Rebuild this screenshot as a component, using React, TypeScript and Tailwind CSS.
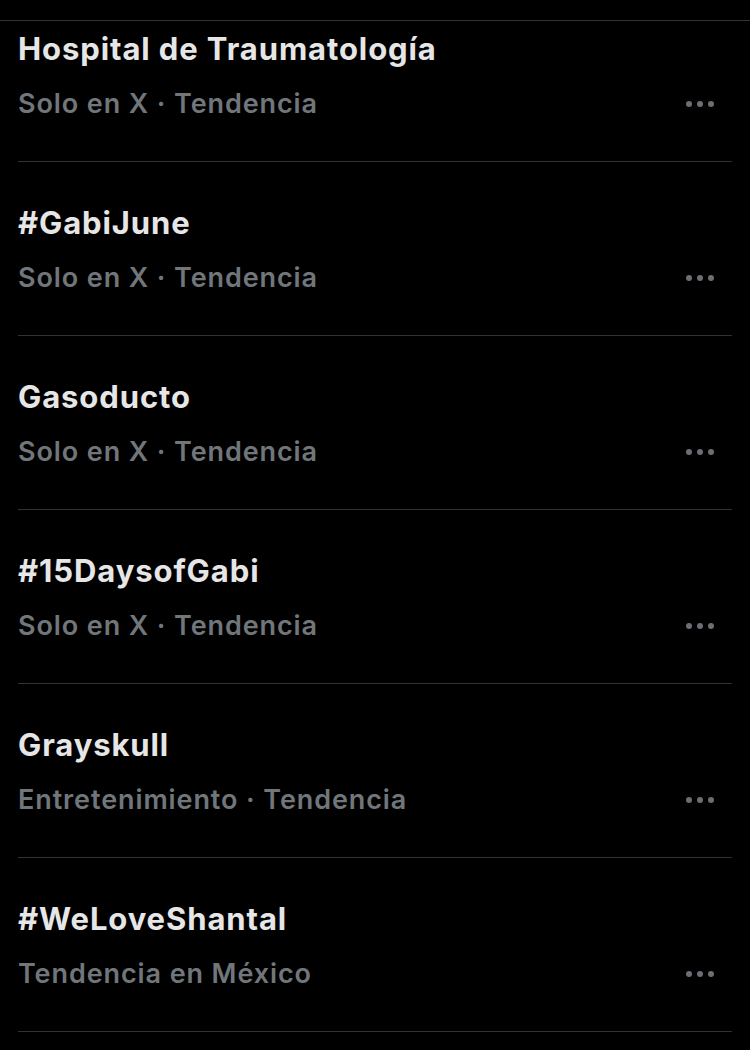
import React from 'react';

interface Trend {
  title: string;
  meta: string;
}

const trends: Trend[] = [
  { title: 'Hospital de Traumatología', meta: 'Solo en X · Tendencia' },
  { title: '#GabiJune', meta: 'Solo en X · Tendencia' },
  { title: 'Gasoducto', meta: 'Solo en X · Tendencia' },
  { title: '#15DaysofGabi', meta: 'Solo en X · Tendencia' },
  { title: 'Grayskull', meta: 'Entretenimiento · Tendencia' },
  { title: '#WeLoveShantal', meta: 'Tendencia en México' },
];

const MoreDots = () => (
  <div className="flex items-center gap-[5px] pr-[18px]">
    <div className="w-[6px] h-[6px] rounded-full bg-[#6b6f73]"></div>
    <div className="w-[6px] h-[6px] rounded-full bg-[#6b6f73]"></div>
    <div className="w-[6px] h-[6px] rounded-full bg-[#6b6f73]"></div>
  </div>
);

const App: React.FC = () => {
  return (
    <div
      className="w-[750px] h-[1050px] overflow-hidden bg-black"
      style={{ fontFamily: 'Inter, "Noto Sans", sans-serif' }}
    >
      {/* 상단 구분선 */}
      <div className="h-[21px] border-b border-[#2f3336]"></div>
      <div className="px-[18px]">
        {trends.map((t, i) => (
          <div
            key={t.title}
            className={`border-b border-[#2f3336] pb-[38px] ${i === 0 ? 'pt-[9px]' : 'pt-[42px]'}`}
          >
            <div className="text-[31px] leading-[38px] font-bold text-[#e6e6e6] tracking-[0.9px]">
              {t.title}
            </div>
            <div className="flex items-center justify-between mt-[17px]">
              <div className="text-[27px] leading-[38px] font-semibold text-[#71767b] tracking-[0.9px]">
                {t.meta}
              </div>
              <MoreDots />
            </div>
          </div>
        ))}
      </div>
    </div>
  );
};

export default App;
